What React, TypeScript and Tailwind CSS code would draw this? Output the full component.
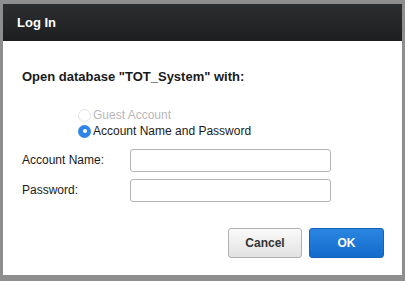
import React from "react";

const App = () => {
  return (
    <div className="flex h-[281px] w-[405px] flex-col bg-[#8e8e8e] pb-[6px] pl-[3px] pr-[3px] pt-[4px] font-['Liberation_Sans',Arial,sans-serif]">
      <div className="flex h-[37px] items-center bg-gradient-to-b from-[#2c2e30] to-[#1c1e20] pl-[14px] text-[13px] font-bold text-white">
        Log In
      </div>
      <div className="flex flex-1 flex-col bg-white">
        <div className="pl-[19px] pt-[26px] text-[13px] font-bold text-[#1a1a1a]">
          Open database "TOT_System" with:
        </div>
        <div className="mt-[22px] flex flex-col gap-[3px] pl-[75px] text-[12px]">
          <label className="flex h-[13px] items-center text-[#b8b8b8]">
            <span className="mr-[2px] h-[13px] w-[13px] rounded-full border border-[#e4e4e4] bg-white" />
            Guest Account
          </label>
          <label className="flex h-[13px] items-center text-[#1a1a1a]">
            <span className="mr-[2px] flex h-[13px] w-[13px] items-center justify-center rounded-full bg-[#2f86e8]">
              <span className="h-[4px] w-[4px] rounded-full bg-white" />
            </span>
            Account Name and Password
          </label>
        </div>
        <div className="mt-[11px] flex flex-col gap-[7px] pl-[19px] text-[12px] text-[#1a1a1a]">
          <div className="flex items-center">
            <span className="w-[108px]">Account Name:</span>
            <input className="h-[23px] w-[201px] rounded-[3px] border border-[#b4b4b4] bg-white outline-none" />
          </div>
          <div className="flex items-center">
            <span className="w-[108px]">Password:</span>
            <input type="password" className="h-[23px] w-[201px] rounded-[3px] border border-[#b4b4b4] bg-white outline-none" />
          </div>
        </div>
        <div className="mt-auto flex justify-end gap-[7px] pb-[17px] pr-[18px]">
          <button className="h-[30px] w-[74px] rounded-[3px] border border-[#b0b0b0] bg-gradient-to-b from-[#fafafa] to-[#e2e2e2] text-[12px] font-bold text-[#333]">
            Cancel
          </button>
          <button className="h-[30px] w-[75px] rounded-[3px] border border-[#1560b8] bg-gradient-to-b from-[#2a85e0] to-[#136ccc] text-[12px] font-bold text-white">
            OK
          </button>
        </div>
      </div>
    </div>
  );
};

export default App;
